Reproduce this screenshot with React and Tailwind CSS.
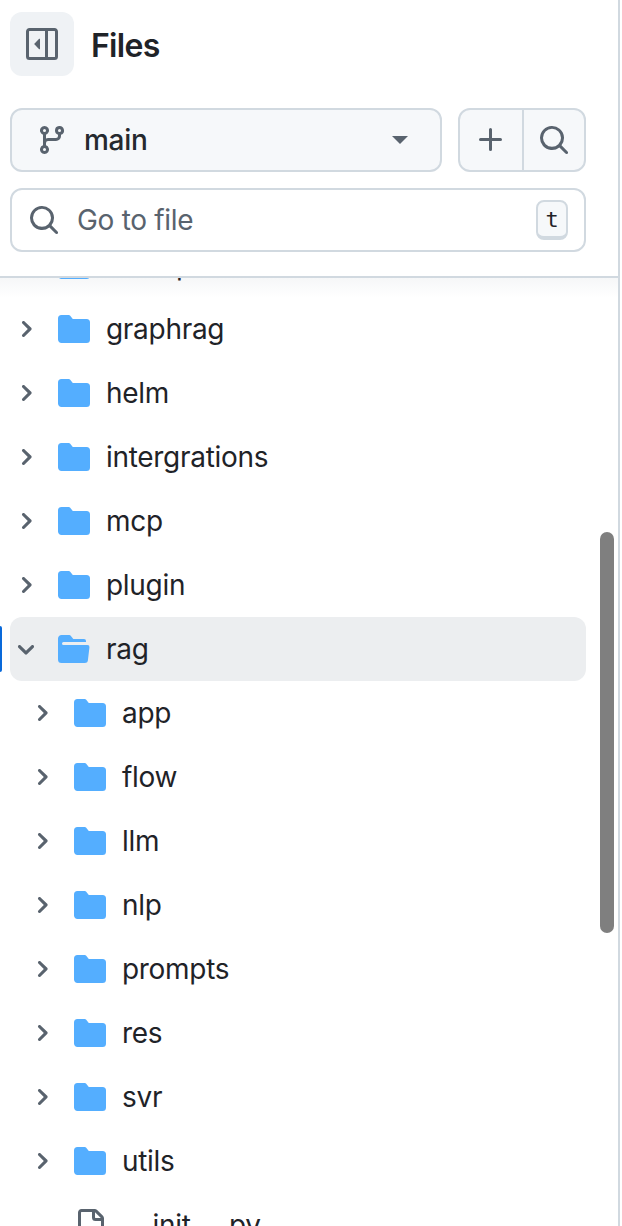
import React from "react";

const paths = {
    sidebar: "M4.177 7.823l2.396-2.396A.25.25 0 0 1 7 5.604v4.792a.25.25 0 0 1-.427.177L4.177 8.177a.25.25 0 0 1 0-.354Z M1.75 0h12.5C15.216 0 16 .784 16 1.75v12.5A1.75 1.75 0 0 1 14.25 16H1.75A1.75 1.75 0 0 1 0 14.25V1.75C0 .784.784 0 1.75 0ZM1.5 1.75v12.5c0 .138.112.25.25.25H9.5v-13H1.75a.25.25 0 0 0-.25.25ZM11 14.5h3.25a.25.25 0 0 0 .25-.25V1.75a.25.25 0 0 0-.25-.25H11Z",
    branch: "M9.5 3.25a2.25 2.25 0 1 1 3 2.122V6A2.5 2.5 0 0 1 10 8.5H6a1 1 0 0 0-1 1v1.128a2.251 2.251 0 1 1-1.5 0V5.372a2.25 2.25 0 1 1 1.5 0v1.836A2.493 2.493 0 0 1 6 7h4a1 1 0 0 0 1-1v-.628A2.25 2.25 0 0 1 9.5 3.25Zm-6 0a.75.75 0 1 0 1.5 0 .75.75 0 0 0-1.5 0Zm8.25-.75a.75.75 0 1 0 0 1.5.75.75 0 0 0 0-1.5ZM4.25 12a.75.75 0 1 0 0 1.5.75.75 0 0 0 0-1.5Z",
    plus: "M7.75 2a.75.75 0 0 1 .75.75V7h4.25a.75.75 0 0 1 0 1.5H8.5v4.25a.75.75 0 0 1-1.5 0V8.5H2.75a.75.75 0 0 1 0-1.5H7V2.75A.75.75 0 0 1 7.75 2Z",
    search: "M10.68 11.74a6 6 0 0 1-7.922-8.982 6 6 0 0 1 8.982 7.922l3.04 3.04a.749.749 0 0 1-.326 1.275.749.749 0 0 1-.734-.215ZM11.5 7a4.499 4.499 0 1 0-8.997 0A4.499 4.499 0 0 0 11.5 7Z",
    folder: "M1.75 1A1.75 1.75 0 0 0 0 2.75v10.5C0 14.216.784 15 1.75 15h12.5A1.75 1.75 0 0 0 16 13.25v-8.5A1.75 1.75 0 0 0 14.25 3H7.5a.25.25 0 0 1-.2-.1l-.9-1.2C6.07 1.26 5.55 1 5 1H1.75Z",
    folderOpen: "M.513 1.513A1.75 1.75 0 0 1 1.75 1h3.5c.55 0 1.07.26 1.4.7l.9 1.2a.25.25 0 0 0 .2.1H13a1 1 0 0 1 1 1v.5H2.75a.75.75 0 0 0 0 1.5h11.978a1 1 0 0 1 .994 1.117L15 13.25A1.75 1.75 0 0 1 13.25 15H1.75A1.75 1.75 0 0 1 0 13.25V2.75c0-.464.184-.91.513-1.237Z",
    file: "M2 1.75C2 .784 2.784 0 3.75 0h6.586c.464 0 .909.184 1.237.513l2.914 2.914c.329.328.513.773.513 1.237v9.586A1.75 1.75 0 0 1 13.25 16h-9.5A1.75 1.75 0 0 1 2 14.25Zm1.75-.25a.25.25 0 0 0-.25.25v12.5c0 .138.112.25.25.25h9.5a.25.25 0 0 0 .25-.25V6h-2.75A1.75 1.75 0 0 1 9 4.25V1.5Zm6.75.062V4.25c0 .138.112.25.25.25h2.688l-.011-.013-2.914-2.914-.013-.011Z",
};

// the tree's chevrons are the 12px octicons
const chevrons = {
    right: "M4.7 10c-.2 0-.4-.1-.5-.2-.3-.3-.3-.8 0-1.1L6.9 6 4.2 3.3c-.3-.3-.3-.8 0-1.1.3-.3.8-.3 1.1 0l3.3 3.2c.3.3.3.8 0 1.1L5.3 9.7c-.2.2-.4.3-.6.3Z",
    down: "M6 8.825c-.2 0-.4-.1-.5-.2l-3.3-3.3c-.3-.3-.3-.8 0-1.1.3-.3.8-.3 1.1 0l2.7 2.7 2.7-2.7c.3-.3.8-.3 1.1 0 .3.3.3.8 0 1.1l-3.2 3.2c-.2.2-.4.3-.6.3Z",
};

const Icon = ({ name, className = "" }) => (
    <svg viewBox="0 0 16 16" fill="currentColor" fillRule="evenodd" className={`shrink-0 ${className}`}>
        <path d={paths[name]} />
    </svg>
);

const TreeRow = ({ name, depth = 0, open = false, active = false, file = false }) => (
    <div
        className={`relative ml-[10px] flex h-16 w-[576px] items-center rounded-xl ${depth === 1 ? "pl-4" : ""} ${active ? "bg-[#eceef0]" : ""}`}
    >
        {/* current item marker */}
        {active && (
            <div className="absolute top-[9px] left-[-10px] h-[46px] w-[2px] rounded-r bg-[#0969da]" />
        )}
        <div className="flex w-8 shrink-0 justify-center text-[#59636e]">
            {!file && (
                <svg viewBox="0 0 12 12" fill="currentColor" className="size-6">
                    <path d={open ? chevrons.down : chevrons.right} />
                </svg>
            )}
        </div>
        <Icon
            name={file ? "file" : open ? "folderOpen" : "folder"}
            className={`ml-4 size-8 ${file ? "text-[#59636e]" : "text-[#54aeff]"}`}
        />
        <span className="ml-4 text-[28px] leading-10 tracking-[-0.3px] text-[#1f2328]">{name}</span>
    </div>
);

const topFolders = ["example", "graphrag", "helm", "intergrations", "mcp", "plugin"];
const ragFolders = ["app", "flow", "llm", "nlp", "prompts", "res", "svr", "utils"];

export default function App() {
    return (
        <div className="relative flex h-[1226px] w-[622px] flex-col overflow-hidden bg-white font-['Inter',sans-serif]">
            <div className="absolute top-0 right-0 bottom-0 w-[4px] border-l-2 border-[#d1d9e0] bg-white" />

            {/* Header */}
            <div className="z-10 h-[278px] w-[618px] shrink-0 border-b-2 border-[#d1d9e0] pt-3 pl-[10px]">
                <div className="flex items-center">
                    <button className="flex size-16 items-center justify-center rounded-xl bg-[#eff2f5] text-[#59636e]">
                        <Icon name="sidebar" className="size-8" />
                    </button>
                    <h1 className="mt-[3px] ml-[17px] text-[32px] font-semibold tracking-[-0.7px] text-[#1f2328]">Files</h1>
                </div>

                <div className="mt-8 flex w-[576px] gap-4">
                    <button className="flex h-16 w-[432px] items-center rounded-xl border-2 border-[#d1d9e0] bg-[#f6f8fa] pr-8 pl-6">
                        <Icon name="branch" className="size-8 text-[#59636e]" />
                        <span className="ml-[16px] flex-1 text-left text-[28px] font-medium tracking-[-0.3px] text-[#25292e]">main</span>
                        <span className="h-0 w-0 border-x-[8px] border-t-[8px] border-x-transparent border-t-[#59636e]" />
                    </button>
                    <div className="flex h-16 w-32 rounded-xl border-2 border-[#d1d9e0] bg-[#f6f8fa] text-[#59636e]">
                        <button className="flex w-[64px] items-center justify-center border-r-2 border-[#d1d9e0]">
                            <Icon name="plus" className="size-8" />
                        </button>
                        <button className="flex flex-1 items-center justify-center">
                            <Icon name="search" className="size-8" />
                        </button>
                    </div>
                </div>

                <div className="mt-4 flex h-16 w-[576px] items-center rounded-xl border-2 border-[#d1d9e0] bg-white pr-4 pl-4">
                    <Icon name="search" className="size-8 text-[#59636e]" />
                    <span className="ml-[17px] flex-1 text-[28px] tracking-[-0.3px] text-[#59636e]">Go to file</span>
                    <kbd className="flex h-10 w-8 items-center justify-center rounded-lg border-2 border-b-4 border-[#d1d9e0] bg-[#f6f8fa] font-['DejaVu_Sans_Mono',monospace] text-[22px] text-[#1f2328]">
                        t
                    </kbd>
                </div>
            </div>

            {/* Tree, scrolled down */}
            <div className="relative w-[618px] flex-1 overflow-hidden">
                <div className="absolute inset-x-0 top-0 z-0 h-5 bg-gradient-to-b from-[#f6f7f8] to-transparent" />
                <div className="relative z-10 -mt-[45px]">
                    {topFolders.map((name) => (
                        <TreeRow key={name} name={name} />
                    ))}
                    <TreeRow name="rag" open active />
                    {ragFolders.map((name) => (
                        <TreeRow key={name} name={name} depth={1} />
                    ))}
                    <TreeRow
                        depth={1}
                        file
                        name={
                            <>
                                <span className="tracking-[2.5px]">__</span>init<span className="tracking-[2.5px]">__</span>.py
                            </>
                        }
                    />
                </div>
                {/* scrollbar thumb */}
                <div className="absolute top-[254px] left-[600px] z-20 h-[401px] w-[14px] rounded-full bg-[#7f7f7f]" />
            </div>
        </div>
    );
}
